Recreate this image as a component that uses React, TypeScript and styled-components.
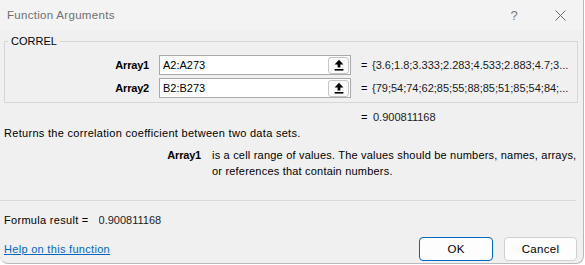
import React from 'react';
import styled, { createGlobalStyle } from 'styled-components';

const GlobalStyle = createGlobalStyle`
  html, body {
    margin: 0;
    padding: 0;
    background: #ffffff;
  }
  * {
    box-sizing: border-box;
  }
`;

const args = [
  { name: 'Array1', ref: 'A2:A273', value: '{3.6;1.8;3.333;2.283;4.533;2.883;4.7;3...' },
  { name: 'Array2', ref: 'B2:B273', value: '{79;54;74;62;85;55;88;85;51;85;54;84;...' },
];

const UploadIcon = () => (
  <svg width="10" height="12" viewBox="0 0 10 12">
    <path d="M5 0.8 L9.4 5.4 H6.4 V8.6 H3.6 V5.4 H0.6 Z" fill="#000" />
    <rect x="0.6" y="10" width="8.8" height="1.6" fill="#000" />
  </svg>
);

const CloseIcon = () => (
  <svg width="11" height="11" viewBox="0 0 11 11">
    <path d="M0.5 0.5 L10.5 10.5 M10.5 0.5 L0.5 10.5" stroke="#6b6b6b" strokeWidth="1" fill="none" />
  </svg>
);

const App = () => {
  return (
    <>
      <GlobalStyle />
      <Window>
        <TitleBar>
          <Title>Function Arguments</Title>
          <TitleButtons>
            <TitleButton>?</TitleButton>
            <TitleButton>
              <CloseIcon />
            </TitleButton>
          </TitleButtons>
        </TitleBar>

        <Body>
          <Group>
            <Legend>CORREL</Legend>
            <ArgGrid>
              {args.map((arg) => (
                <React.Fragment key={arg.name}>
                  <ArgLabel>{arg.name}</ArgLabel>
                  <RefInput>
                    <RefText>{arg.ref}</RefText>
                    <CollapseButton>
                      <UploadIcon />
                    </CollapseButton>
                  </RefInput>
                  <Equals>=</Equals>
                  <Value>{arg.value}</Value>
                </React.Fragment>
              ))}
            </ArgGrid>
          </Group>

          <ResultRow>
            <Equals>=</Equals>
            <Value>0.900811168</Value>
          </ResultRow>

          <Summary>Returns the correlation coefficient between two data sets.</Summary>

          <HelpGrid>
            <HelpName>Array1</HelpName>
            <HelpText>
              is a cell range of values. The values should be numbers, names, arrays,
              or references that contain numbers.
            </HelpText>
          </HelpGrid>
        </Body>

        <Separator />

        <Footer>
          <FormulaRow>
            <span>Formula result =</span>
            <Value>0.900811168</Value>
          </FormulaRow>
          <ActionRow>
            <HelpLink href="#">Help on this function</HelpLink>
            <Button $primary>OK</Button>
            <Button>Cancel</Button>
          </ActionRow>
        </Footer>
      </Window>
    </>
  );
};

export default App;

const Window = styled.div`
  width: 584px;
  height: 264px;
  display: flex;
  flex-direction: column;
  background: #f0f0f0;
  border-right: 1px solid #b9b9b9;
  border-bottom: 1px solid #b9b9b9;
  border-bottom-left-radius: 8px;
  border-bottom-right-radius: 8px;
  font-family: "Segoe UI", "Liberation Sans", Arial, sans-serif;
  font-size: 11px;
  letter-spacing: 0.3px;
  color: #000;
  overflow: hidden;
`;

const TitleBar = styled.div`
  height: 30px;
  display: flex;
  align-items: center;
  padding-left: 7px;
  background: #f3f3f3;
`;

const Title = styled.div`
  color: #6f6f6f;
  font-size: 11.5px;
`;

const TitleButtons = styled.div`
  margin-left: auto;
  display: flex;
  height: 100%;
`;

const TitleButton = styled.div`
  width: 46px;
  display: flex;
  align-items: center;
  justify-content: center;
  color: #7a7a7a;
  font-size: 13px;
  letter-spacing: 0;
`;

const Body = styled.div`
  padding: 0 0 0 4px;
`;

const Group = styled.fieldset`
  width: 574px;
  margin: 3px 0 0 0;
  padding: 6px 0 4px 0;
  border: 1px solid #d6d6d6;
`;

const Legend = styled.legend`
  margin-left: 3px;
  padding: 0 3px;
  line-height: 16px;
  letter-spacing: 0;
`;

const ArgGrid = styled.div`
  display: grid;
  grid-template-columns: 154px 192px 21px 1fr;
  grid-auto-rows: 20px;
  row-gap: 3px;
  align-items: center;
`;

const ArgLabel = styled.div`
  text-align: right;
  padding-right: 10px;
  font-weight: bold;
  letter-spacing: -0.2px;
`;

const RefInput = styled.div`
  height: 20px;
  display: flex;
  align-items: center;
  padding-left: 3px;
  background: #fff;
  border: 1px solid #a9a9a9;
`;

const RefText = styled.span`
  flex: 1;
  letter-spacing: 0;
`;

const CollapseButton = styled.div`
  width: 21px;
  height: 17px;
  margin-right: 1px;
  display: flex;
  align-items: center;
  justify-content: center;
  background: #fbfbfb;
  border: 1px solid #c6c6c6;
  border-radius: 3px;
`;

const Equals = styled.div`
  padding-left: 10px;
`;

const Value = styled.div`
  white-space: nowrap;
  overflow: hidden;
  letter-spacing: 0;
  color: #1a1a1a;
`;

const ResultRow = styled.div`
  display: grid;
  grid-template-columns: 22px 1fr;
  height: 16px;
  line-height: 16px;
  margin: 6px 0 0 347px;
`;

const Summary = styled.div`
  line-height: 16px;
`;

const HelpGrid = styled.div`
  display: grid;
  grid-template-columns: 208px 372px;
  margin-top: 6px;
  line-height: 16px;
`;

const HelpName = styled.div`
  text-align: right;
  padding-right: 11px;
  font-weight: bold;
  letter-spacing: -0.2px;
`;

const HelpText = styled.div`
  letter-spacing: 0.2px;
`;

const Separator = styled.div`
  width: 576px;
  margin-top: 21px;
  border-top: 1px solid #d9d9d9;
`;

const Footer = styled.div`
  padding: 0 6px 0 4px;
`;

const FormulaRow = styled.div`
  display: flex;
  gap: 10px;
  height: 16px;
  line-height: 16px;
  margin-top: 11px;
`;

const ActionRow = styled.div`
  display: flex;
  align-items: center;
  margin-top: 9px;
`;

const HelpLink = styled.a`
  margin-right: auto;
  color: #0067c0;
  text-decoration: underline;
`;

const Button = styled.button<{ $primary?: boolean }>`
  width: ${(p) => (p.$primary ? '74px' : '73px')};
  height: 24px;
  margin-left: ${(p) => (p.$primary ? '0' : '11px')};
  padding: 0;
  font-family: inherit;
  font-size: 11.5px;
  letter-spacing: 0.3px;
  color: #000;
  background: #fdfdfd;
  border: 1px solid ${(p) => (p.$primary ? '#0067c0' : '#d0d0d0')};
  border-radius: 4px;
`;
